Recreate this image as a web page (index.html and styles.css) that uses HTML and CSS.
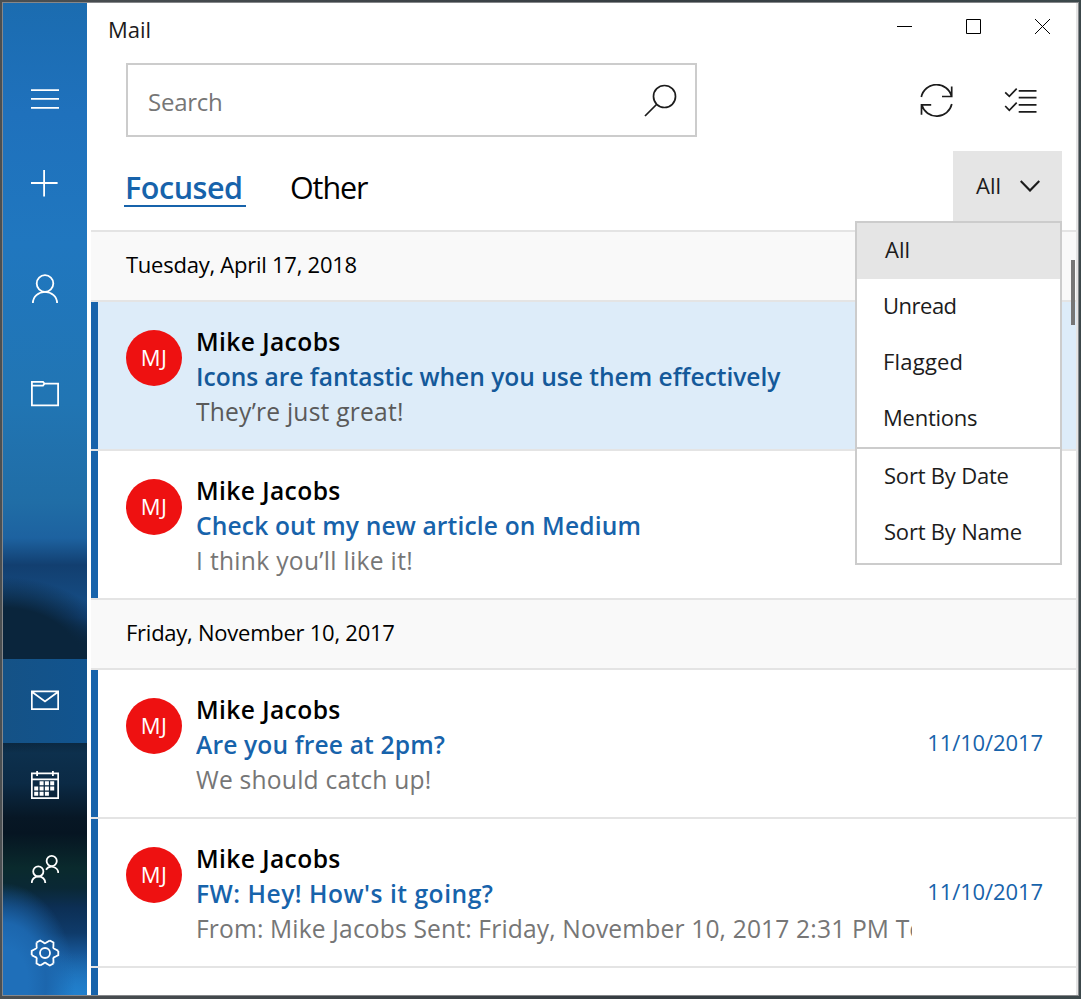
FILE: index.html
```html
<!DOCTYPE html>
<html lang="en">
<head>
<meta charset="utf-8">
<title>Mail</title>
<link rel="stylesheet" href="styles.css">
</head>
<body>
<div class="window">
  <nav class="rail">
    <div class="rail-item"><svg width="28" height="28" viewBox="0 0 28 28"><path d="M0 5.200h28M0 13.900h28M0 22.900h28"/></svg></div>
    <div class="rail-item"><svg width="28" height="28" viewBox="0 0 28 28"><path d="M0 14h26.600M13.100 1v26.600"/></svg></div>
    <div class="rail-item spaced"><svg width="28" height="30" viewBox="0 -2 28 30"><circle cx="14" cy="8.500" r="8.300"/><path d="M1.900 28a12.100 11.200 0 0 1 24.200 0"/></svg></div>
    <div class="rail-item spaced"><svg width="28" height="28" viewBox="0 0 28 28"><path d="M.9 26.400V2.900H12l1.500 1.800H27.100V26.400ZM.9 6.600H12l1.500-1.900"/></svg></div>
    <div class="rail-item selected"><svg width="28" height="28" viewBox="0 0 28 28"><path d="M.8 4.300H27.200V22.200H.8ZM.8 4.800l13.200 9.600 13.200-9.600"/></svg></div>
    <div class="rail-item"><svg width="28" height="28" viewBox="0 0 28 28"><path d="M.8 2.300H27.200V27.200H.8ZM.8 8.300H27.200M6.100 0v5M21.900 0v5"/><path class="solid" d="M8.600 10.200h4v4h-4zM13.900 10.200h4v4h-4zM19.200 10.200h4v4h-4zM3.200 15.500h4v4h-4zM8.600 15.500h4v4h-4zM13.900 15.500h4v4h-4zM19.200 15.500h4v4h-4zM3.200 20.800h4v4h-4zM8.600 20.800h4v4h-4zM13.900 20.800h4v4h-4z"/></svg></div>
    <div class="rail-item"><svg width="28" height="28" viewBox="0 0 28 28"><circle cx="20.700" cy="6" r="5.100"/><circle cx="7.300" cy="16.400" r="5.100"/><path d="M.7 28a6.800 6.700 0 0 1 13.600 0M15 14.700a6.700 6.500 0 0 1 12.300 3.300"/></svg></div>
    <div class="rail-item"><svg width="30" height="30" viewBox="-15 -15 30 30"><defs><path id="tooth" d="M13.300-2.100V2.100L9.900 4Q7.700 4.400 8.410 6.570L8.470 10.470"/></defs><circle r="5"/><use href="#tooth"/><use href="#tooth" transform="rotate(60)"/><use href="#tooth" transform="rotate(120)"/><use href="#tooth" transform="rotate(180)"/><use href="#tooth" transform="rotate(240)"/><use href="#tooth" transform="rotate(300)"/></svg></div>
  </nav>

  <main class="content">
    <header class="titlebar">
      <span class="app-name">Mail</span>
      <div class="controls">
        <span><svg width="15" height="15" viewBox="0 0 15 15"><path d="M0 7.500h15"/></svg></span>
        <span><svg width="15" height="15" viewBox="0 0 15 15"><path d="M.5.500h14v14H.5z"/></svg></span>
        <span><svg width="15" height="15" viewBox="0 0 15 15"><path d="M0 0l15 15M15 0L0 15"/></svg></span>
      </div>
    </header>

    <div class="toolbar">
      <div class="search"><span>Search</span><svg width="34" height="34" viewBox="0 0 34 34"><circle cx="20.500" cy="12.500" r="11"/><path d="M12.500 20.500L1 32"/></svg></div>
      <svg class="sync" width="34" height="34" viewBox="0 0 34 34"><path d="M1.300 13A15.500 15.500 0 0 1 31.500 12.300M31.700 2.500V12.500H22M31.800 20A15.500 15.500 0 0 1 1.800 21M1.500 30.700V20.900H11.200"/></svg>
      <svg class="checklist" width="34" height="34" viewBox="0 0 34 34"><path d="M1.200 8.300l4.100 4L12.700 4.700M1.200 22l4.100 4.300L12.700 18.700M14.700 6.800H32.500M14.700 13.700H32.500M14.700 20.800H32.500M14.700 27.900H32.500"/></svg>
    </div>

    <div class="tabs">
      <span class="tab active">Focused</span>
      <span class="tab">Other</span>
      <div class="filter">
        <span>All</span>
        <svg width="20" height="12" viewBox="0 0 20 12"><path d="M.7 1L10 10.500 19.300 1"/></svg>
        <div class="menu">
          <div class="option current">All</div>
          <div class="option snug">Unread</div>
          <div class="option wide">Flagged</div>
          <div class="option">Mentions</div>
          <div class="divider"></div>
          <div class="option tight">Sort By Date</div>
          <div class="option tight">Sort By Name</div>
        </div>
      </div>
    </div>

    <section class="list">
      <h2 class="day">Tuesday, April 17, 2018</h2>
      <article class="message hovered">
        <div class="avatar">MJ</div>
        <div class="body">
          <div class="from">Mike Jacobs</div>
          <div class="subject even">Icons are fantastic when you use them effectively</div>
          <div class="preview">They’re just great!</div>
        </div>
      </article>
      <article class="message">
        <div class="avatar">MJ</div>
        <div class="body">
          <div class="from">Mike Jacobs</div>
          <div class="subject">Check out my new article on Medium</div>
          <div class="preview loose">I think you’ll like it!</div>
        </div>
      </article>
      <h2 class="day">Friday, November 10, 2017</h2>
      <article class="message">
        <div class="avatar">MJ</div>
        <div class="body">
          <div class="from">Mike Jacobs</div>
          <div class="subject">Are you free at 2pm?</div>
          <div class="preview">We should catch up!</div>
        </div>
        <time class="date">11/10/2017</time>
      </article>
      <article class="message">
        <div class="avatar">MJ</div>
        <div class="body">
          <div class="from">Mike Jacobs</div>
          <div class="subject open">FW: Hey! How's it going?</div>
          <div class="preview long">From: Mike Jacobs Sent: Friday, November 10, 2017 2:31 PM To</div>
        </div>
        <time class="date">11/10/2017</time>
      </article>
      <article class="message"></article>
      <div class="scroll-thumb"></div>
    </section>
  </main>
</div>
</body>
</html>
```
FILE: styles.css
```css
* { box-sizing: border-box; }
body {
  margin: 0;
  width: 1081px;
  height: 999px;
  padding: 2px 2px 3px;
  overflow: hidden;
  background: linear-gradient(90deg, #4a4f52, #363d42 60%, #3c484b);
  font-family: "Open Sans", "Noto Sans", sans-serif;
  font-size: 22px;
  color: #1c1c1c;
}
svg { display: block; fill: none; stroke: currentColor; stroke-width: 1.7; flex: none; }
h2 { margin: 0; font-weight: 400; }
.window { display: flex; height: 994px; border: 1px solid #85878a; background: #fff; }

.rail {
  width: 84px;
  flex: none;
  display: flex;
  flex-direction: column;
  padding-top: 54px;
  color: #fff;
  background:
    radial-gradient(ellipse 72px 100px at 0 980px, #1f6fb9 35%, #1c66ad 60%, transparent 100%),
    radial-gradient(ellipse 120px 88px at 0 662px, #0a253c 65%, transparent 100%),
    linear-gradient(transparent 950px, #2180cd 992px),
    linear-gradient(#1b6cb0 0, #1f71bc 110px, #2077bf 240px, #2175b3 400px, #206da6 500px, #1d62a0 535px, #123f70 562px, #154a80 595px, #134782 615px, #0a2640 640px, #0a253c 735px, #0d304d 750px, #0b2a45 780px, #071725 815px, #061522 830px, #0a2a2d 865px, #0a2835 885px, #0c2f55 905px, #0f3b6a 930px, #175696 950px, #2074be 992px);
}
.rail-item { height: 84px; flex: none; display: grid; place-items: center; }
.rail-item.spaced { margin-top: 21px; }
.rail-item.selected { margin-top: auto; background: linear-gradient(90deg, #155286, #11548f); }
.rail svg { stroke-width: 1.8; }
.rail .solid { fill: currentColor; stroke: none; }

.content { flex: 1; min-width: 0; display: flex; flex-direction: column; margin-left: 4px; border-right: 2px solid #e4e4e4; }
.titlebar { height: 48px; display: flex; justify-content: space-between; padding-left: 17px; flex: none; }
.app-name { line-height: 53px; }
.controls { display: flex; margin-right: -1px; height: 47px; }
.controls span { width: 69px; display: grid; place-items: center; }
.controls svg { stroke-width: 1; color: #000; }

.toolbar { height: 100px; display: flex; padding: 12px 38px 0 35px; flex: none; }
.search { width: 571px; height: 74px; border: 2px solid #ccc; display: flex; align-items: center; justify-content: space-between; padding: 1px 17px 0 19px; color: #767676; font-size: 24px; letter-spacing: -.25px; }
.search span { padding: 2px 0 0 1px; }
.search svg { color: #1c1c1c; }
.sync { margin: 21px 0 0 223px; }
.checklist { margin: 21px 0 0 50px; }

.tabs { height: 79px; display: flex; padding: 0 14px 0 33px; flex: none; }
.tab { font-size: 30.500px; line-height: 73px; color: #000; height: 56px; white-space: nowrap; letter-spacing: -1.100px; }
.tab.active { width: 122px; padding-left: 1px; margin-right: 44px; font-weight: 600; color: #1763ab; border-bottom: 2px solid #1763ab; letter-spacing: -.45px; }
.filter { position: relative; margin-left: auto; width: 109px; height: 70px; padding: 0 22px 0 23px; background: #e5e5e5; display: flex; align-items: center; justify-content: space-between; }
.filter > span { margin-top: -2px; }
.filter > svg { stroke-width: 2.200; }
.menu { position: absolute; z-index: 2; top: 70px; right: 0; width: 207px; height: 344px; border: 2px solid #ccc; background: #fff; }
.option { height: 56px; line-height: 53px; padding-left: 26px; white-space: nowrap; letter-spacing: -.25px; }
.option.current { background: #e5e5e5; padding-left: 28px; letter-spacing: 0; }
.option.snug { letter-spacing: -.5px; }
.option.wide { letter-spacing: .2px; }
.option.tight { letter-spacing: -.2px; padding-left: 27px; }
.divider { height: 2px; background: #ccc; }

.list { position: relative; flex: 1; min-height: 0; overflow: hidden; border-top: 2px solid #e4e4e4; }
.day { height: 70px; padding-left: 35px; font-size: 22px; line-height: 65px; letter-spacing: -.25px; color: #000; background: #f9f9f9; border-bottom: 2px solid #e4e4e4; }
.message { height: 149px; display: flex; background: linear-gradient(#1763ab, #1763ab) 0 0 / 7px 147px no-repeat, linear-gradient(#e4e4e4, #e4e4e4) 0 147px / 100% 2px no-repeat; padding: 22px 33px 0 35px; }
.message.hovered { background-color: #ddecf9; }
.avatar { width: 56px; height: 56px; margin: 6px 14px 0 0; flex: none; border-radius: 50%; background: #ee1111; color: #fff; line-height: 54px; text-align: center; font-size: 22px; letter-spacing: .3px; }
.body { width: 716px; flex: none; overflow: hidden; white-space: nowrap; font-size: 24.600px; line-height: 35px; }
.from { color: #000; font-weight: 600; letter-spacing: .4px; }
.subject { color: #1763ab; font-weight: 600; letter-spacing: .14px; }
.subject.even { letter-spacing: -.03px; }
.subject.open { letter-spacing: .51px; }
.preview { color: #767676; letter-spacing: .22px; }
.preview.loose { letter-spacing: .31px; }
.preview.long { letter-spacing: .155px; }
.hovered .subject { color: #14599a; }
.hovered .preview { color: #5a5a5a; }
.date { margin-left: auto; line-height: 101px; color: #1763ab; letter-spacing: -.1px; }
.scroll-thumb { position: absolute; right: 1px; top: 28px; width: 4px; height: 65px; background: #767676; }
```
